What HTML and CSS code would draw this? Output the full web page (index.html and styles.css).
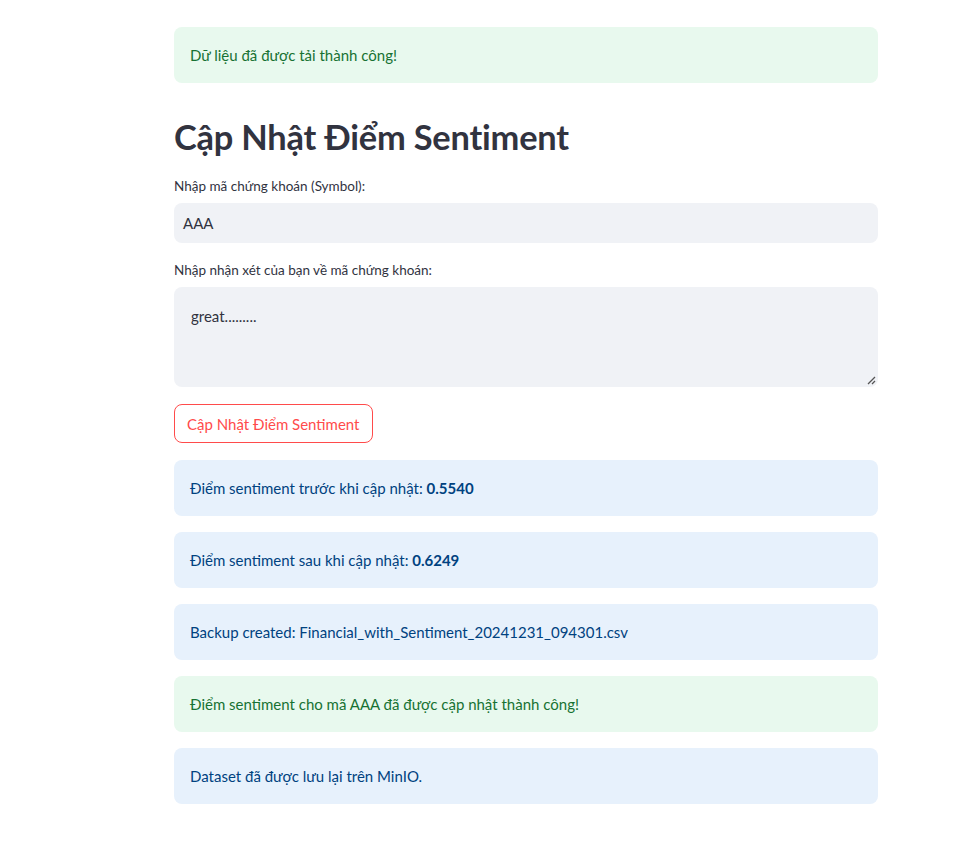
FILE: index.html
```html
<!DOCTYPE html>
<html lang="vi">
<head>
<meta charset="utf-8">
<link rel="stylesheet" href="styles.css">
</head>
<body>
<main class="main">
  <div class="block">
    <div class="alert success"><span>Dữ liệu đã được tải thành công!</span></div>
    <h1 class="title">Cập Nhật Điểm Sentiment</h1>
    <div class="field">
      <label class="label">Nhập mã chứng khoán (Symbol):</label>
      <div class="input">AAA</div>
    </div>
    <div class="field">
      <label class="label">Nhập nhận xét của bạn về mã chứng khoán:</label>
      <div class="textarea">great.........
        <svg class="grip" width="10" height="10" viewBox="0 0 10 10"><path d="M9 2L2 9M9 6L6 9" stroke="#555" stroke-width="1.3" fill="none"/></svg>
      </div>
    </div>
    <div class="btn-row"><button class="btn">Cập Nhật Điểm Sentiment</button></div>
    <div class="alert info"><span>Điểm sentiment trước khi cập nhật: <b>0.5540</b></span></div>
    <div class="alert info"><span>Điểm sentiment sau khi cập nhật: <b>0.6249</b></span></div>
    <div class="alert info"><span>Backup created: Financial_with_Sentiment_20241231_094301.csv</span></div>
    <div class="alert success"><span>Điểm sentiment cho mã AAA đã được cập nhật thành công!</span></div>
    <div class="alert info"><span>Dataset đã được lưu lại trên MinIO.</span></div>
  </div>
</main>
</body>
</html>
```
FILE: styles.css
```css
* { box-sizing: border-box; }
html, body { margin: 0; padding: 0; background: #fff; }
body {
  font-family: "Lato", "Noto Sans", sans-serif;
  color: rgb(49, 51, 63);
  font-size: 15px;
}
.main {
  width: 704px;
  margin-left: 174px;
  padding-top: 27px;
  padding-bottom: 50px;
}
.block { display: flex; flex-direction: column; gap: 16px; }
.alert {
  border-radius: 8px;
  padding: 0 16px;
  height: 56px;
  display: flex;
  align-items: center;
  font-size: 15px;
}
.alert b { font-weight: 700; }
.success { background: #e8f9ee; color: rgb(23, 114, 51); }
.info { background: #e7f1fc; color: rgb(0, 66, 128); }
.title {
  margin: 17px 0 2px 0;
  font-size: 34.4px;
  font-weight: 700;
  line-height: 1.2;
  letter-spacing: -0.2px;
}
.field { display: flex; flex-direction: column; }
.label { font-size: 13.5px; line-height: 18px; margin-bottom: 8px; margin-top: 2px; }
.input {
  height: 40px;
  background: #f0f2f6;
  border-radius: 8px;
  padding: 0 9px;
  display: flex;
  align-items: center;
  font-size: 15px;
}
.textarea {
  position: relative;
  height: 100px;
  background: #f0f2f6;
  border-radius: 8px;
  padding: 20px 17px 0;
  font-size: 15px;
}
.grip { position: absolute; right: 2px; bottom: 2px; }
.btn-row { display: flex; margin: 1px 0 1px; }
.btn {
  font-family: inherit;
  font-size: 15px;
  color: rgb(255, 75, 75);
  background: #fff;
  border: 1px solid rgb(255, 75, 75);
  border-radius: 8px;
  height: 39px;
  padding: 0 12px;
}
```
